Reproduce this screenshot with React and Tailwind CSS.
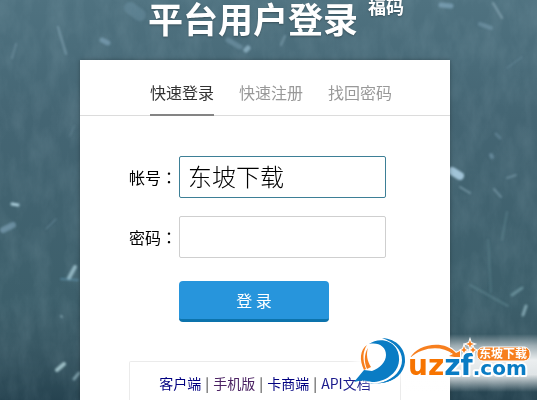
import React, { useState } from 'react'

const flakes = [
  { x1: 58, y1: 27, x2: 66, y2: 54, w: 2, c: '#8fb0bf', o: 0.55 },
  { x1: 16, y1: 44, x2: 12, y2: 58, w: 2, c: '#8fb0bf', o: 0.35 },
  { x1: 102, y1: 40, x2: 108, y2: 43, w: 5, c: '#8fb4cc', o: 0.5 },
  { x1: 130, y1: 8, x2: 140, y2: 15, w: 12, c: '#8fb4cc', o: 0.22 },
  { x1: 228, y1: 40, x2: 240, y2: 47, w: 5, c: '#8fb4cc', o: 0.35 },
  { x1: 246, y1: 50, x2: 248, y2: 48, w: 5, c: '#a9cde0', o: 0.6 },
  { x1: 285, y1: 36, x2: 281, y2: 45, w: 2, c: '#8fb0bf', o: 0.5 },
  { x1: 441, y1: 5, x2: 451, y2: 6, w: 5, c: '#8fb4cc', o: 0.55 },
  { x1: 493, y1: 3, x2: 502, y2: 18, w: 2, c: '#9dbac6', o: 0.6 },
  { x1: 480, y1: 24, x2: 491, y2: 28, w: 4, c: '#8fb4cc', o: 0.35 },
  { x1: 507, y1: 68, x2: 522, y2: 57, w: 1, c: '#8fb4cc', o: 0.4 },
  { x1: 74, y1: 126, x2: 70, y2: 136, w: 1, c: '#8fb0bf', o: 0.35 },
  { x1: 496, y1: 134, x2: 500, y2: 138, w: 3, c: '#8fb4cc', o: 0.3 },
  { x1: 491, y1: 155, x2: 492, y2: 157, w: 4, c: '#8fb4cc', o: 0.4 },
  { x1: 452, y1: 171, x2: 460, y2: 176, w: 8, c: '#b8dbf0', o: 0.8 },
  { x1: 460, y1: 187, x2: 470, y2: 193, w: 2, c: '#8fb0bf', o: 0.6 },
  { x1: 494, y1: 189, x2: 501, y2: 197, w: 2, c: '#8fb0bf', o: 0.5 },
  { x1: 507, y1: 178, x2: 516, y2: 175, w: 2, c: '#8fb0bf', o: 0.45 },
  { x1: 12, y1: 204, x2: 18, y2: 205, w: 3, c: '#b4d6e4', o: 0.9 },
  { x1: 3, y1: 230, x2: 13, y2: 225, w: 6, c: '#8fb4cc', o: 0.5 },
  { x1: 46, y1: 229, x2: 56, y2: 219, w: 1, c: '#8fb4cc', o: 0.55 },
  { x1: 69, y1: 278, x2: 75, y2: 267, w: 4, c: '#a9cdd8', o: 0.75 },
  { x1: 61, y1: 279, x2: 78, y2: 280, w: 2, c: '#6aa0bd', o: 0.5 },
  { x1: 61, y1: 316, x2: 62, y2: 317, w: 2, c: '#a9cdd8', o: 0.5 },
  { x1: 57, y1: 370, x2: 64, y2: 364, w: 4, c: '#b4d6dc', o: 0.8 },
  { x1: 74, y1: 379, x2: 79, y2: 373, w: 3, c: '#a9cdd8', o: 0.6 },
  { x1: 507, y1: 212, x2: 502, y2: 240, w: 2, c: '#6f98a3', o: 0.35 },
  { x1: 470, y1: 285, x2: 508, y2: 306, w: 2, c: '#6f98a3', o: 0.4 },
  { x1: 488, y1: 240, x2: 491, y2: 292, w: 2, c: '#6f98a3', o: 0.3 },
  { x1: 512, y1: 295, x2: 522, y2: 288, w: 3, c: '#7fa9b3', o: 0.6 },
  { x1: 523, y1: 315, x2: 526, y2: 306, w: 3, c: '#9cc0cb', o: 0.7 },
]

const tabs = ['快速登录', '快速注册', '找回密码']

const links = [
  { text: '客户端', color: 'text-[#000080]' },
  { text: '手机版', color: 'text-[#4b2263]' },
  { text: '卡商端', color: 'text-[#000080]' },
  { text: 'API文档', color: 'text-[#1a1a8c]' },
]

function SnowBackground() {
  return (
    <svg className="absolute inset-0 h-full w-full" viewBox="0 0 537 400" preserveAspectRatio="xMidYMid slice" aria-hidden="true">
      <defs>
        <linearGradient id="sky" x1="0" y1="0" x2="0" y2="1">
          <stop offset="0" stopColor="#4f7280" />
          <stop offset="0.3" stopColor="#446573" />
          <stop offset="0.75" stopColor="#3d5f6b" />
          <stop offset="0.88" stopColor="#375662" />
          <stop offset="1" stopColor="#264350" />
        </linearGradient>
        <filter id="soft"><feGaussianBlur stdDeviation="0.8" /></filter>
        <filter id="grain" x="0" y="0" width="100%" height="100%">
          <feTurbulence type="fractalNoise" baseFrequency="0.06 0.03" numOctaves="5" seed="4" />
          <feColorMatrix values="0 0 0 0 0.55  0 0 0 0 0.72  0 0 0 0 0.8  0.9 0 0 0 -0.3" />
        </filter>
      </defs>
      <rect width="537" height="400" fill="url(#sky)" />
      <rect width="537" height="400" filter="url(#grain)" opacity="0.2" />
      <g filter="url(#soft)" strokeLinecap="round">
        {flakes.map((f, i) => (
          <line key={i} x1={f.x1} y1={f.y1} x2={f.x2} y2={f.y2} stroke={f.c} strokeWidth={f.w} opacity={f.o} />
        ))}
      </g>
    </svg>
  )
}

function SiteLogo() {
  return (
    <svg className="pointer-events-none absolute right-0 bottom-0 h-[75px] w-[192px]" viewBox="0 0 192 75" role="img" aria-label="uzzf.com 东坡下载">
      <defs>
        <linearGradient id="halo" x1="0" y1="0" x2="0" y2="1">
          <stop offset="0" stopColor="#fff" stopOpacity="0" />
          <stop offset="0.2" stopColor="#fff" stopOpacity="0.5" />
          <stop offset="0.45" stopColor="#fff" stopOpacity="0.9" />
          <stop offset="0.7" stopColor="#fff" stopOpacity="0.85" />
          <stop offset="1" stopColor="#fff" stopOpacity="0" />
        </linearGradient>
        <filter id="glow" x="-20%" y="-20%" width="140%" height="140%"><feGaussianBlur stdDeviation="4" /></filter>
      </defs>
      <rect x="60" y="9" width="132" height="58" fill="url(#halo)" />
      <ellipse cx="35" cy="38" rx="26" ry="22" fill="#fff" opacity="0.9" filter="url(#glow)" />

      {/* emblem */}
      <path d="M24 19 C32 13 45 14 51 23 C57 33 54 45 45 51 C40 55 33 57 27 57 C21 55 15 55 9 57 L19 45 L27 46 C35 43 41 37 41 30 C41 22 34 17 24 19 Z" fill="#0a7cc4" />
      <path d="M37 13 C52 14 61 24 60 37 C59 48 50 57 36 58 C50 53 57 45 57 35 C57 25 49 17 37 13 Z" fill="#0a7cc4" />
      <path d="M24 58 C33 60 46 56 52 49 L57 45 C51 55 40 60 24 58 Z" fill="#0a7cc4" />
      <path d="M22 20 C15 25 14 35 19 45 L21 44 C17 34 18 26 22 20 Z" fill="#f77f1e" />
      <path d="M23 23 C19 29 19 37 22 44 L26 42 C22 36 21 29 23 23 Z" fill="#f77f1e" />

      {/* arrow over the name */}
      <path d="M65 33 C72 19 99 14 111 28 L115 26 L115 33 L104 31 L108 29 C96 20 77 22 65 33 Z" fill="#f77f1e" stroke="#fff" strokeWidth="2" paintOrder="stroke" />

      <text x="63" y="50" fontSize="28" fontFamily="'DejaVu Sans', sans-serif" fontWeight="700" fill="#0a7cc4" stroke="#fff" strokeWidth="4" strokeLinejoin="round" paintOrder="stroke">
        <tspan fill="#f77400">uz</tspan>zf<tspan fontSize="20">.com</tspan>
      </text>

      {/* sparkles */}
      <g fill="#f77f1e" stroke="#fff" strokeWidth="2" paintOrder="stroke">
        <path d="M125 15 l1 3 3 1 -3 1 -1 3 -1 -3 -3 -1 3 -1z" />
        <path d="M119 21 l1 3 2 1 -2 1 -1 2 -1 -2 -2 -1 2 -1z" />
        <path d="M128 22 l1 2 2 1 -2 1 -1 2 -1 -2 -2 -1 2 -1z" />
      </g>

      <rect x="132" y="22" width="53" height="14" rx="6" fill="#f77f1e" stroke="#fff" strokeWidth="1" />
      <text x="134" y="33" fontSize="12" fontWeight="700" fontFamily="'Noto Sans CJK SC', sans-serif" fill="#fff">东坡下载</text>
    </svg>
  )
}

function Field({ id, label, ...props }) {
  return (
    <div className="flex items-center">
      <label htmlFor={id} className="w-[50px] shrink-0 whitespace-nowrap font-['Noto_Sans_CJK_TC',sans-serif] text-base text-black">{label}</label>
      <input id={id} className="h-[42px] w-full max-w-[207px] min-w-0 rounded-xs border border-[#cfcfcf] bg-white px-2 pb-1 text-2xl font-light text-black outline-none focus:border-[#3d7f96]" {...props} />
    </div>
  )
}

export default function App() {
  const [account, setAccount] = useState('东坡下载')
  const [password, setPassword] = useState('')

  return (
    <main className="relative flex min-h-screen flex-col items-center overflow-hidden bg-[#3f5f6b] pr-[7px] font-['Noto_Sans_CJK_SC',sans-serif]">
      <SnowBackground />

      <header className="relative flex h-[60px] w-full max-w-[370px] items-start gap-[10px] pl-[68px] font-bold whitespace-nowrap text-white [text-shadow:0_1px_2px_rgba(0,0,0,0.3)]">
        <h1 className="text-[35px] leading-9">平台用户登录</h1>
        <span className="text-lg leading-3">福码</span>
      </header>

      <section className="relative flex w-full max-w-[370px] flex-1 flex-col bg-white shadow-[0_0_4px_rgba(0,0,0,0.3)]">
        <nav className="flex gap-[25px] border-b border-[#dcdcdc] pt-5 pl-[70px]">
          {tabs.map((tab, i) => (
            <a key={tab} href="#" className={`-mb-px border-b-2 pb-[10px] text-base leading-6 ${i === 0 ? 'border-[#848484] text-[#333]' : 'border-transparent text-[#999]'}`}>
              {tab}
            </a>
          ))}
        </nav>

        <form className="flex flex-col gap-[18px] px-[49px] pt-10" onSubmit={e => e.preventDefault()}>
          <Field id="account" label="帐号：" type="text" autoFocus value={account} onChange={e => setAccount(e.target.value)} />
          <Field id="password" label="密码：" type="password" value={password} onChange={e => setPassword(e.target.value)} />
          <button type="submit" className="mt-[5px] ml-[50px] h-[41px] w-[150px] rounded-sm border-b-3 border-[#0c73ac] bg-[#2795dc] text-base text-white">
            登 录
          </button>
        </form>

        <div className="mx-[49px] mt-[39px] flex flex-1 items-start justify-center rounded-t-xs border border-b-0 border-[#ebebeb] pt-[11px] text-sm leading-5 whitespace-nowrap text-[#333]">
          {links.map((link, i) => (
            <React.Fragment key={link.text}>
              {i > 0 && <span className="w-3 text-center">|</span>}
              <a href="#" className={link.color}>{link.text}</a>
            </React.Fragment>
          ))}
        </div>
      </section>

      <SiteLogo />
    </main>
  )
}
